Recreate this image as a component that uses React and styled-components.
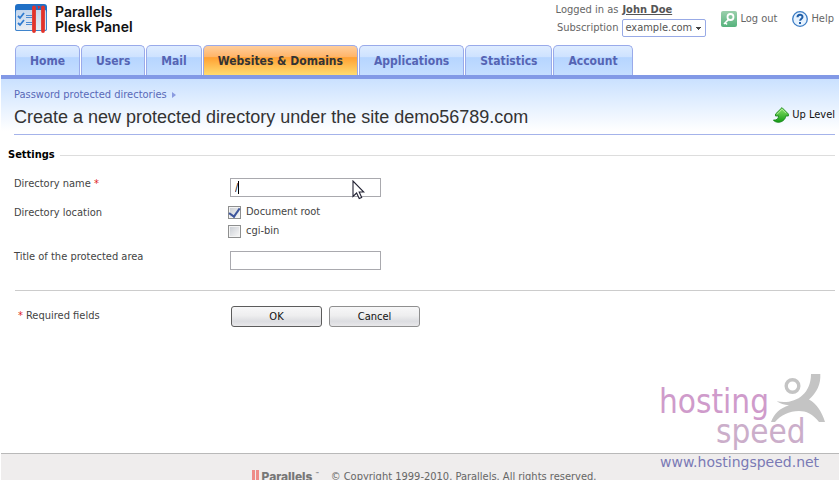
import React, { useState } from 'react';
import styled, { createGlobalStyle } from 'styled-components';

const tabs = ['Home', 'Users', 'Mail', 'Websites & Domains', 'Applications', 'Statistics', 'Account'];

const PanelLogo = () => (
	<svg width="33" height="30" viewBox="0 0 33 30" aria-hidden="true">
		<defs>
			<linearGradient id="sheet" x1="0" y1="0" x2="0" y2="1">
				<stop offset="0" stopColor="#c3d6ee" />
				<stop offset="1" stopColor="#e9edf2" />
			</linearGradient>
		</defs>
		<rect x="0" y="0" width="32" height="27" rx="3" fill="#2070c6" />
		<rect x="0" y="7" width="32" height="20" rx="2" fill="#3f84cc" />
		<rect x="1" y="6" width="30" height="20" rx="1" fill="url(#sheet)" />
		<path d="M3 12l2 2 4-5M3 19l2 2 4-5" fill="none" stroke="#2f7bd0" strokeWidth="1.800" />
		<path d="M11 11.500h6M11 13.500h6M11 18.500h6M11 20.500h6" stroke="#4c8bd2" strokeWidth="1" />
		<path d="M19 3.500v23.500M28 3.500v23.500" stroke="#e2332b" strokeWidth="3.800" strokeLinecap="round" />
		<path d="M22.500 1.500l3 1-2 3z" fill="#d62a33" />
	</svg>
);

const KeyIcon = () => (
	<svg width="16" height="16" viewBox="0 0 16 16" aria-hidden="true">
		<defs>
			<linearGradient id="key" x1="0" y1="0" x2="0" y2="1">
				<stop offset="0" stopColor="#9bd0ac" />
				<stop offset="1" stopColor="#55b27c" />
			</linearGradient>
		</defs>
		<rect width="16" height="16" rx="2" fill="url(#key)" />
		<circle cx="9.500" cy="6" r="3" fill="none" stroke="#fff" strokeWidth="1.800" />
		<path d="M7.500 8.500L3 13M4 11.500l2 2" fill="none" stroke="#fff" strokeWidth="1.600" />
	</svg>
);

const HelpIcon = () => (
	<svg width="16" height="16" viewBox="0 0 16 16" aria-hidden="true">
		<circle cx="8" cy="8" r="7.300" fill="#e6f2fe" stroke="#3b7cc4" strokeWidth="1.300" />
		<path d="M5.500 6.200c0-3.300 5-3.300 5-.2 0 1.700-2.400 1.700-2.400 3.800" fill="none" stroke="#1f5ea8" strokeWidth="2" />
		<rect x="7" y="11" width="2" height="2" fill="#1f5ea8" />
	</svg>
);

const UpIcon = () => (
	<svg width="16" height="16" viewBox="0 0 16 16" aria-hidden="true">
		<defs>
			<linearGradient id="up" x1="0" y1="0" x2="0" y2="1">
				<stop offset="0" stopColor="#8be36a" />
				<stop offset="1" stopColor="#139a14" />
			</linearGradient>
		</defs>
		<path
			d="M9 .6L15.400 7v2h-2.600c-.3 3.600-4 6.500-7.800 6.300-2.200-.1-3.800-1-4.600-2.300 3 .4 5-1 5.200-4H2.500V7z"
			fill="url(#up)"
			stroke="#128216"
			strokeWidth=".8"
		/>
		<path d="M4 7.300L9 2.200l4 4" fill="none" stroke="#c9f7b4" strokeWidth=".8" />
	</svg>
);

const Pointer = () => (
	<svg width="13" height="20" viewBox="0 0 13 20" aria-hidden="true">
		<path d="M1 1v15.500l3.600-3.500 2.600 5.600 2.500-1.200L7.200 12H11.800z" fill="#fff" stroke="#222233" strokeWidth="1.100" />
	</svg>
);

const RunnerMark = () => (
	<svg width="54" height="50" viewBox="0 0 54 50" aria-hidden="true">
		<circle cx="21.500" cy="12" r="6.300" fill="none" stroke="#c4c4c4" strokeWidth="3.400" />
		<path
			d="M40 0h9.300c.5 10-3 18-11.300 25.500C46 30 51 38 54 48h-6C42 40 35 37 28 37 18 37 10 41 4 48H0c3-8 9-14 18-16.700-5-.3-9-1.600-12.300-4C22 31 40 22 40 0z"
			fill="#c4c4c4"
		/>
	</svg>
);

const App = () => {
	const [directory, setDirectory] = useState('/');
	const [title, setTitle] = useState('');
	const [docRoot, setDocRoot] = useState(true);
	const [cgiBin, setCgiBin] = useState(false);

	return (
		<Page>
			<GlobalStyle />
			<Header>
				<Brand>
					<PanelLogo />
					<BrandName>
						<span>Parallels</span>
						<span>Plesk Panel</span>
					</BrandName>
				</Brand>
				<Account>
					<Session>
						<span>Logged in as</span>
						<UserLink href="#profile">John Doe</UserLink>
						<label htmlFor="subscription">Subscription</label>
						<Select id="subscription">
							<option>example.com</option>
						</Select>
					</Session>
					<ToolLink href="#logout">
						<KeyIcon />
						Log out
					</ToolLink>
					<ToolLink href="#help">
						<HelpIcon />
						Help
					</ToolLink>
				</Account>
			</Header>
			<Tabs>
				{tabs.map((tab) => (
					<Tab key={tab} href="#tab" $active={tab === 'Websites & Domains'}>
						{tab}
					</Tab>
				))}
			</Tabs>
			<Banner>
				<Crumb href="#directories">Password protected directories</Crumb>
				<TitleRow>
					<Title>Create a new protected directory under the site demo56789.com</Title>
					<UpLink href="#up">
						<UpIcon />
						Up Level
					</UpLink>
				</TitleRow>
			</Banner>
			<Form onSubmit={(e) => e.preventDefault()}>
				<Legend>Settings</Legend>
				<Fields>
					<FieldLabel htmlFor="directory">
						Directory name <Star>*</Star>
					</FieldLabel>
					<FieldBox>
						<TextInput id="directory" value={directory} onChange={(e) => setDirectory(e.target.value)} />
						<Caret />
						<PointerSpot>
							<Pointer />
						</PointerSpot>
					</FieldBox>
					<FieldLabel as="span" id="location">
						Directory location
					</FieldLabel>
					<Checks role="group" aria-labelledby="location">
						<Check>
							<Checkbox type="checkbox" checked={docRoot} onChange={(e) => setDocRoot(e.target.checked)} />
							Document root
						</Check>
						<Check>
							<Checkbox type="checkbox" checked={cgiBin} onChange={(e) => setCgiBin(e.target.checked)} />
							cgi-bin
						</Check>
					</Checks>
					<FieldLabel htmlFor="title">Title of the protected area</FieldLabel>
					<FieldBox>
						<TextInput id="title" value={title} onChange={(e) => setTitle(e.target.value)} />
					</FieldBox>
				</Fields>
				<Actions>
					<Required>
						<Star>*</Star>Required fields
					</Required>
					<Button type="submit" $primary>
						OK
					</Button>
					<Button type="button">Cancel</Button>
				</Actions>
			</Form>
			<Footer>
				<FooterBrand>
					<Bars />
					Parallels<sup>™</sup>
				</FooterBrand>
				<span>© Copyright 1999-2010. Parallels. All rights reserved.</span>
			</Footer>
			<Watermark>
				<Hosting>hosting</Hosting>
				<Speed>speed</Speed>
				<Runner>
					<RunnerMark />
				</Runner>
				<Site href="#hostingspeed">www.hostingspeed.net</Site>
			</Watermark>
		</Page>
	);
};

export default App;

const GlobalStyle = createGlobalStyle`
	* {
		box-sizing: border-box;
	}

	body {
		margin: 0;
		background: #fff;
		color: #444;
		font: 11px/14px 'DejaVu Sans Condensed', 'Noto Sans', sans-serif;
	}

	svg {
		display: block;
		flex: none;
	}
`;

const Page = styled.div`
	position: relative;
	display: flex;
	flex-direction: column;
	height: 100vh;
	min-height: 400px;
	padding: 0 1px;
	overflow: hidden;
`;

const Header = styled.header`
	display: flex;
	justify-content: space-between;
	height: 45px;
	padding: 0 5px 0 14px;
`;

const Brand = styled.div`
	display: flex;
	gap: 7px;
	padding-top: 4px;
`;

const BrandName = styled.div`
	display: grid;
	align-content: start;
	color: #111;
	font: 600 14px/15px Inter, sans-serif;
`;

const Account = styled.div`
	display: flex;
	gap: 15px;
	color: #666;
`;

const Session = styled.div`
	display: grid;
	grid-template-columns: auto auto;
	align-items: center;
	align-content: start;
	gap: 2px 4px;
	padding-top: 3px;
	justify-items: start;

	label {
		justify-self: end;
	}
`;

const UserLink = styled.a`
	color: #555;
	font-weight: bold;
`;

const Select = styled.select`
	width: 84px;
	height: 18px;
	padding: 0 2px;
	border: 1px solid #98aae6;
	border-radius: 2px;
	appearance: none;
	color: #555;
	font: inherit;
	background:
		linear-gradient(#444, #444) right 4px top 7px / 5px 1px no-repeat,
		linear-gradient(#444, #444) right 5px top 8px / 3px 1px no-repeat,
		linear-gradient(#444, #444) right 6px top 9px / 1px 1px no-repeat,
		#fff;
`;

const ToolLink = styled.a`
	display: flex;
	align-items: center;
	align-self: flex-start;
	gap: 3px;
	padding-top: 11px;
	color: #666;
	text-decoration: none;
	white-space: nowrap;
`;

const Tabs = styled.nav`
	display: flex;
	gap: 1px;
	padding-left: 14px;
	border-bottom: 4px solid #8299e6;
`;

const Tab = styled.a`
	height: 30px;
	padding: 0 14px;
	border: 1px solid #99aaea;
	border-bottom: 0;
	border-radius: 5px 5px 0 0;
	color: ${(props) => (props.$active ? '#333' : '#5564b4')};
	background: ${(props) =>
		props.$active
			? 'linear-gradient(#ffce9c, #ffb468 38%, #ffa133 40%, #ffdb70)'
			: 'linear-gradient(#deecff, #cee2ff 38%, #b6d5ff 40%, #c5deff)'};
	font-size: 12px;
	font-weight: bold;
	line-height: 30px;
	text-decoration: none;
	white-space: nowrap;
`;

const Banner = styled.div`
	padding: 9px 4px 0 13px;
	background: linear-gradient(#cae1ff, #fff 52px);
`;

const Crumb = styled.a`
	display: flex;
	align-items: center;
	gap: 5px;
	color: #5969b8;
	text-decoration: none;

	&::after {
		content: '';
		border: 3px solid transparent;
		border-left: 4px solid #8a9be0;
	}
`;

const TitleRow = styled.div`
	display: flex;
	align-items: center;
	justify-content: space-between;
	height: 33px;
	padding-bottom: 3px;
	border-bottom: 1px solid #a5b3ea;
`;

const Title = styled.h1`
	margin: 0;
	color: #333;
	font: 18px/22px 'Liberation Sans', Arial, sans-serif;
`;

const UpLink = styled.a`
	display: flex;
	align-items: center;
	gap: 3px;
	padding-bottom: 3px;
	color: #111;
	text-decoration: none;
`;

const Form = styled.form`
	flex: 1;
	padding: 13px 4px 0 7px;
`;

const Legend = styled.h2`
	display: flex;
	align-items: center;
	gap: 5px;
	margin: 0;
	color: #000;
	font-size: 11px;
	line-height: 14px;

	&::after {
		content: '';
		flex: 1;
		height: 1px;
		background: #ddd;
	}
`;

const Fields = styled.div`
	display: grid;
	grid-template-columns: 214px 1fr;
	gap: 8px 0;
	padding: 14px 0 20px 6px;
`;

const FieldLabel = styled.label`
	padding-top: 1px;
`;

const FieldBox = styled.div`
	position: relative;
	width: 151px;
	margin: 2px 0 0 2px;
`;

const TextInput = styled.input`
	display: block;
	width: 100%;
	height: 19px;
	padding: 0 4px;
	border: 1px solid #a9a9ae;
	background: #fff;
	color: #111;
	font: inherit;
	outline: none;
`;

const Caret = styled.i`
	position: absolute;
	top: 3px;
	left: 8px;
	width: 1px;
	height: 13px;
	background: #000;
`;

const PointerSpot = styled.span`
	position: absolute;
	top: 2px;
	left: 122px;
`;

const Checks = styled.div`
	display: grid;
	gap: 5px;
	margin-bottom: 3px;
`;

const Check = styled.label`
	display: flex;
	align-items: center;
	gap: 5px;
`;

const Checkbox = styled.input`
	display: grid;
	place-content: center;
	width: 13px;
	height: 13px;
	margin: 0;
	border: 1px solid #8e8f8f;
	appearance: none;
	background: linear-gradient(135deg, #cbcfd5, #f6f6f6) content-box, #f4f4f4;
	padding: 1px;

	&:checked::after {
		content: '';
		width: 5px;
		height: 9px;
		margin-bottom: 2px;
		border: solid #3d559c;
		border-width: 0 2px 2px 0;
		transform: rotate(35deg);
	}
`;

const Star = styled.span`
	color: #d22;
`;

const Actions = styled.div`
	display: flex;
	gap: 7px;
	margin-left: 7px;
	padding-top: 15px;
	border-top: 1px solid #ccc;
`;

const Required = styled.span`
	display: flex;
	align-items: flex-start;
	gap: 3px;
	width: 209px;
	padding: 3px 0 0 3px;
`;

const Button = styled.button`
	width: 91px;
	height: 21px;
	padding: 0;
	border: 1px solid ${(props) => (props.$primary ? '#5c5c5c' : '#8f8f8f')};
	border-radius: 3px;
	background: linear-gradient(#f7f7f8, #eeeeef 45%, #dcdde1 75%, #e8e8ea);
	color: #111;
	font: inherit;
`;

const Footer = styled.footer`
	display: flex;
	justify-content: center;
	gap: 12px;
	flex: none;
	height: 27px;
	padding: 16px 0 0 8px;
	overflow: hidden;
	border-top: 1px solid #b9b9b9;
	background: #efeded;
	color: #666;
`;

const FooterBrand = styled.strong`
	display: flex;
	gap: 3px;
	color: #777;
	font: 800 12px/14px Inter, sans-serif;

	sup {
		font-size: 5px;
		line-height: 8px;
	}
`;

const Bars = styled.i`
	width: 7px;
	height: 14px;
	border: solid #ee8c88;
	border-width: 0 3px;
`;

const Watermark = styled.div`
	position: absolute;
	right: 15px;
	bottom: 8px;
	width: 166px;
	height: 98px;
`;

const Hosting = styled.span`
	position: absolute;
	top: 8px;
	left: 0;
	color: #cf9bcb;
	font-size: 33px;
	line-height: 40px;
`;

const Speed = styled.span`
	position: absolute;
	top: 38px;
	left: 57px;
	color: #cbaeca;
	font-size: 33px;
	line-height: 40px;
`;

const Runner = styled.span`
	position: absolute;
	top: 0;
	right: 0;
`;

const Site = styled.a`
	position: absolute;
	bottom: 0;
	left: 1px;
	color: #7a7ab5;
	font: 14px/20px 'DejaVu Sans', sans-serif;
	text-decoration: none;
`;
